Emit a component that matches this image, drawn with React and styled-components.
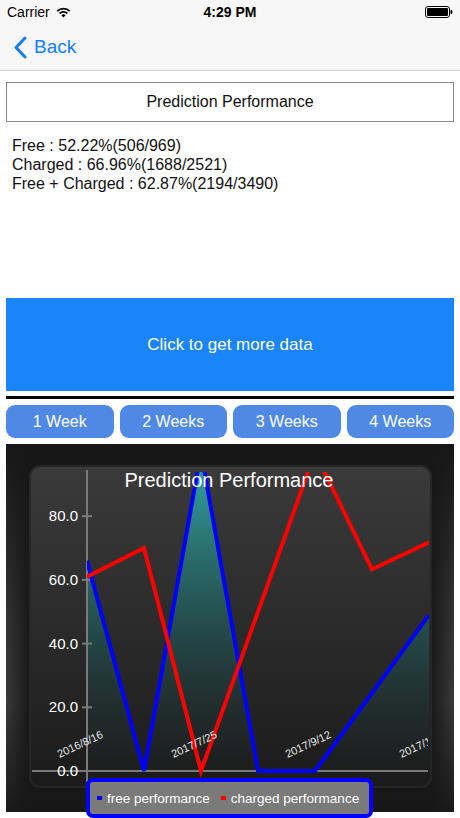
import React from 'react';
import styled, { createGlobalStyle } from 'styled-components';

const GlobalStyle = createGlobalStyle`
  body {
    margin: 0;
    background: #fff;
    font-family: 'Liberation Sans', Arial, sans-serif;
  }
`;

const Screen = styled.div`
  width: 460px;
  height: 818px;
  overflow: hidden;
  background: #fff;
  display: flex;
  flex-direction: column;
`;

const Header = styled.header`
  background: #f7f7f7;
  border-bottom: 1px solid #d4d4d4;
`;

const StatusBar = styled.div`
  height: 24px;
  padding: 0 7px;
  display: grid;
  grid-template-columns: 1fr auto 1fr;
  align-items: center;
  font-size: 14px;
  color: #000;

  .left {
    display: flex;
    align-items: center;
    gap: 6px;
  }

  .time {
    font-weight: 700;
    font-size: 14px;
  }

  .right {
    display: flex;
    justify-content: flex-end;
  }
`;

const NavBar = styled.div`
  height: 46px;
  display: flex;
  align-items: center;
  padding-left: 13px;
  gap: 7px;
  color: #157efb;
  font-size: 19px;
`;

const Content = styled.main`
  padding: 0 6px;
  display: flex;
  flex-direction: column;
`;

const TitleBox = styled.div`
  margin-top: 11px;
  height: 40px;
  border: 1px solid #8a8a8a;
  box-sizing: border-box;
  display: flex;
  align-items: center;
  justify-content: center;
  font-size: 16px;
  color: #111;
`;

const Stats = styled.div`
  height: 176px;
  box-sizing: border-box;
  padding: 14px 6px 0;
  font-size: 16px;
  line-height: 19px;
  color: #111;
`;

const MoreButton = styled.button`
  height: 93px;
  border: none;
  background: #1a84fb;
  color: #fff;
  font-family: inherit;
  font-size: 17px;
`;

const Divider = styled.div`
  margin-top: 5px;
  height: 3px;
  background: #000;
`;

const WeekRow = styled.div`
  margin-top: 6px;
  display: grid;
  grid-template-columns: repeat(4, 1fr);
  gap: 6px;
`;

const WeekButton = styled.button`
  height: 33px;
  border: none;
  border-radius: 9px;
  background: #5088e6;
  color: #fff;
  font-family: inherit;
  font-size: 16px;
`;

const ChartBox = styled.div`
  position: relative;
  margin-top: 6px;
  height: 368px;
  background: #171717;

  svg {
    display: block;
  }
`;

const Legend = styled.div`
  position: absolute;
  left: 80px;
  top: 334px;
  width: 287px;
  height: 40px;
  box-sizing: border-box;
  border: 4px solid #0000ff;
  border-radius: 7px;
  background: #7a7a7a;
  display: flex;
  align-items: center;
  padding-left: 7px;
  gap: 11px;
  font-family: 'Liberation Sans', Helvetica, sans-serif;
  font-size: 13.5px;
  color: #fff;
`;

const LegendItem = styled.span`
  display: flex;
  align-items: center;
  gap: 5px;

  &::before {
    content: '';
    width: 5px;
    height: 4px;
    background: ${({ color }) => color};
  }
`;

const Wifi = () => (
  <svg width="15" height="11" viewBox="0 0 15 11">
    <path d="M7.5 10.5 L5.4 8.3 A3 3 0 0 1 9.6 8.3 Z" fill="#000" />
    <path d="M3.6 6.5 A5.6 5.6 0 0 1 11.4 6.5" stroke="#000" strokeWidth="1.8" fill="none" />
    <path d="M1.2 4.1 A9 9 0 0 1 13.8 4.1" stroke="#000" strokeWidth="1.8" fill="none" />
  </svg>
);

const Battery = () => (
  <svg width="28" height="12" viewBox="0 0 28 12">
    <rect x="0.5" y="0.5" width="24" height="11" rx="2.5" fill="none" stroke="#000" />
    <rect x="2" y="2" width="21" height="8" rx="1" fill="#000" />
    <rect x="25.5" y="4" width="1.8" height="4" rx="0.8" fill="#000" />
  </svg>
);

const Chevron = () => (
  <svg width="14" height="23" viewBox="0 0 14 23">
    <path d="M12 2 L3 11.5 L12 21" stroke="#157efb" strokeWidth="3" fill="none" strokeLinecap="round" strokeLinejoin="round" />
  </svg>
);

// chart helpers, page coordinates
const xs = [87, 144, 201, 258, 315, 372, 429];
const yOf = (v) => 771 - v * 3.185;
const free = [66, 0, 100, 0, 0, 24.5, 49];
const charged = [61, 70, 0, 50, 100, 63.3, 71.8];
const toPoints = (vals) => vals.map((v, i) => `${xs[i]},${yOf(v).toFixed(1)}`).join(' ');
const yTicks = [0, 20, 40, 60, 80];
const xLabels = [
  { x: 80, text: '2016/8/16' },
  { x: 194, text: '2017/7/25' },
  { x: 308, text: '2017/9/12' },
  { x: 422, text: '2017/10/3' },
];

const Chart = () => (
  <svg width="448" height="368" viewBox="6 444 448 368">
    <defs>
      <linearGradient id="outerSides" x1="0" x2="1" y1="0" y2="0">
        <stop offset="0" stopColor="#3a3a3a" />
        <stop offset="0.05" stopColor="#1a1a1a" />
        <stop offset="0.95" stopColor="#1a1a1a" />
        <stop offset="1" stopColor="#3a3a3a" />
      </linearGradient>
      <linearGradient id="outerFade" x1="0" x2="0" y1="0" y2="1">
        <stop offset="0" stopColor="#171717" stopOpacity="1" />
        <stop offset="0.45" stopColor="#171717" stopOpacity="0.2" />
        <stop offset="0.7" stopColor="#171717" stopOpacity="0" />
        <stop offset="1" stopColor="#171717" stopOpacity="0.9" />
      </linearGradient>
      <linearGradient id="panel" x1="0" x2="0" y1="0" y2="1">
        <stop offset="0" stopColor="#3a3a3a" />
        <stop offset="0.5" stopColor="#2b2b2b" />
        <stop offset="1" stopColor="#1b1b1b" />
      </linearGradient>
      <linearGradient id="area" x1="0" x2="0" y1="472" y2="771" gradientUnits="userSpaceOnUse">
        <stop offset="0" stopColor="#2fa3a0" stopOpacity="0.95" />
        <stop offset="0.6" stopColor="#1f5252" stopOpacity="0.6" />
        <stop offset="1" stopColor="#1e2a2a" stopOpacity="0.1" />
      </linearGradient>
      <clipPath id="plot">
        <rect x="87" y="472" width="342" height="310" />
      </clipPath>
      <clipPath id="panelClip">
        <rect x="30" y="466" width="398" height="320" />
      </clipPath>
    </defs>

    <rect x="6" y="444" width="448" height="368" fill="url(#outerSides)" />
    <rect x="6" y="444" width="448" height="368" fill="url(#outerFade)" />
    <rect x="30" y="466" width="401" height="321" rx="10" fill="url(#panel)" stroke="#262626" strokeWidth="2" />

    <g clipPath="url(#plot)">
      <polygon points={`87,771 ${toPoints(free)} 429,771`} fill="url(#area)" />
    </g>

    <line x1="87" y1="470" x2="87" y2="782" stroke="#7a7a7a" strokeWidth="2" />
    <line x1="32" y1="771" x2="428" y2="771" stroke="#7a7a7a" strokeWidth="2" />
    {yTicks.map((t) => (
      <g key={t}>
        <line x1="82" y1={yOf(t)} x2="92" y2={yOf(t)} stroke="#7a7a7a" strokeWidth="2" />
        <text x="78" y={yOf(t) + 5} textAnchor="end" fill="#fff" fontSize="15" fontFamily="Liberation Sans, Helvetica, sans-serif">
          {t.toFixed(1)}
        </text>
      </g>
    ))}

    <g clipPath="url(#plot)" fill="none" strokeWidth="4" strokeLinejoin="miter">
      <polyline points={toPoints(free)} stroke="#0000ff" />
      <polyline points={toPoints(charged)} stroke="#ff0000" />
    </g>

    <g clipPath="url(#panelClip)">
      {xLabels.map((l) => (
        <text
          key={l.text}
          x={l.x}
          y={748}
          textAnchor="middle"
          fill="#e6e6e6"
          fontSize="11"
          fontFamily="Liberation Sans, Helvetica, sans-serif"
          transform={`rotate(-25 ${l.x} 744)`}
        >
          {l.text}
        </text>
      ))}
    </g>

    <text x="229" y="487" textAnchor="middle" fill="#fff" fontSize="20" fontFamily="Liberation Sans, Helvetica, sans-serif">
      Prediction Performance
    </text>
  </svg>
);

const weeks = ['1 Week', '2 Weeks', '3 Weeks', '4 Weeks'];

const App = () => (
  <Screen>
    <GlobalStyle />
    <Header>
      <StatusBar>
        <div className="left">
          <span>Carrier</span>
          <Wifi />
        </div>
        <span className="time">4:29 PM</span>
        <div className="right">
          <Battery />
        </div>
      </StatusBar>
      <NavBar>
        <Chevron />
        <span>Back</span>
      </NavBar>
    </Header>

    <Content>
      <TitleBox>Prediction Performance</TitleBox>
      <Stats>
        <div>Free : 52.22%(506/969)</div>
        <div>Charged : 66.96%(1688/2521)</div>
        <div>Free + Charged : 62.87%(2194/3490)</div>
      </Stats>
      <MoreButton>Click to get more data</MoreButton>
      <Divider />
      <WeekRow>
        {weeks.map((w) => (
          <WeekButton key={w}>{w}</WeekButton>
        ))}
      </WeekRow>
      <ChartBox>
        <Chart />
        <Legend>
          <LegendItem color="#0000ff">free performance</LegendItem>
          <LegendItem color="#ff0000">charged performance</LegendItem>
        </Legend>
      </ChartBox>
    </Content>
  </Screen>
);

export default App;
